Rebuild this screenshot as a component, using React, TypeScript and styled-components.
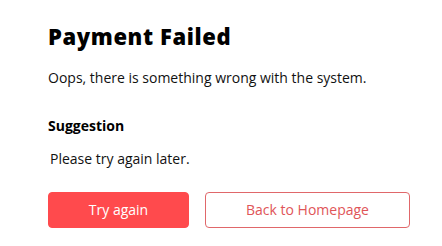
import React from 'react';
import styled, { createGlobalStyle } from 'styled-components';

const GlobalStyle = createGlobalStyle`
  body {
    margin: 0;
    background: #fff;
    font-family: "Open Sans", sans-serif;
    color: #111;
  }
`;

const Page = () => {
  return (
    <Section>
      <GlobalStyle />
      <Title>Payment Failed</Title>
      <Message>Oops, there is something wrong with the system.</Message>
      <Heading>Suggestion</Heading>
      <Hint>Please try again later.</Hint>
      <Actions>
        <Button primary>Try again</Button>
        <Button>Back to Homepage</Button>
      </Actions>
    </Section>
  );
};

const Section = styled.section`
  padding: 21px 32px 0 48px;
  display: flex;
  flex-direction: column;
  align-items: flex-start;
`;

const Title = styled.h1`
  margin: 0;
  font-size: 22px;
  line-height: 30px;
  font-weight: 800;
  letter-spacing: 0.6px;
  color: #000;
`;

const Message = styled.p`
  margin: 17px 0 0;
  font-size: 14px;
  line-height: 20px;
`;

const Heading = styled.h2`
  margin: 28px 0 0;
  font-size: 14px;
  line-height: 20px;
  font-weight: 700;
  color: #000;
`;

const Hint = styled.p`
  margin: 13px 0 0 2px;
  font-size: 14px;
  line-height: 20px;
`;

const Actions = styled.div`
  display: flex;
  gap: 16px;
  margin-top: 23px;
`;

const Button = styled.button<{ primary?: boolean }>`
  box-sizing: border-box;
  height: 36px;
  width: ${(p) => (p.primary ? '141px' : '205px')};
  padding: 0;
  border-radius: 4px;
  font-family: "Open Sans", sans-serif;
  font-size: 14px;
  line-height: 20px;
  cursor: pointer;
  border: 1px solid ${(p) => (p.primary ? '#ff4a4d' : '#e0676a')};
  background: ${(p) => (p.primary ? '#ff4a4d' : '#fff')};
  color: ${(p) => (p.primary ? '#fff' : '#e05558')};
`;

export default Page;
